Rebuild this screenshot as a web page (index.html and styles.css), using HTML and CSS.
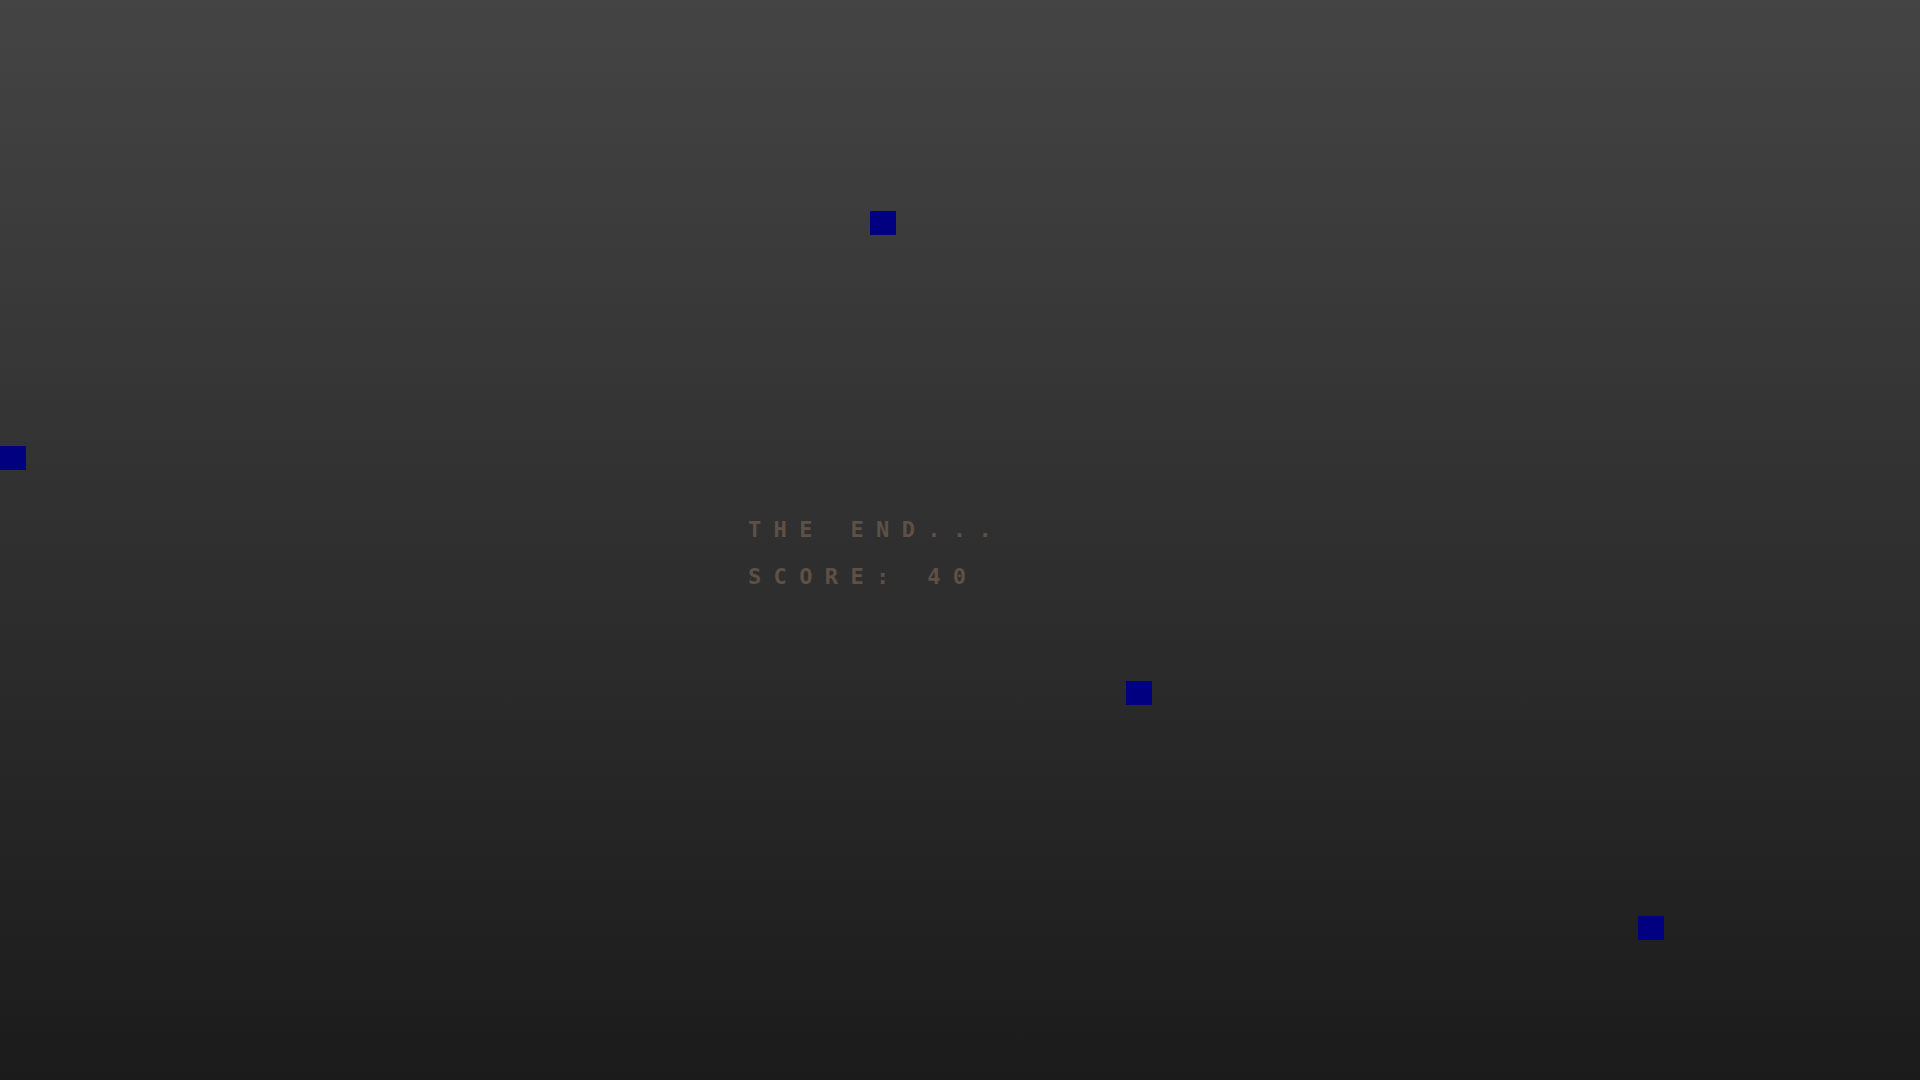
FILE: index.html
```html
<!DOCTYPE html>
<html>
<head>
<meta charset="utf-8">
<link rel="stylesheet" href="styles.css">
</head>
<body>
<div class="stage">
  <div class="block b1"></div>
  <div class="block b2"></div>
  <div class="block b3"></div>
  <div class="block b4"></div>
  <div class="message">
    <div class="line">THE END...</div>
    <div class="line">SCORE: 40</div>
  </div>
</div>
</body>
</html>
```
FILE: styles.css
```css
html, body {
  margin: 0;
  padding: 0;
  width: 1920px;
  height: 1080px;
  overflow: hidden;
}
.stage {
  position: relative;
  width: 1920px;
  height: 1080px;
  background: linear-gradient(to bottom, #444444 0%, #1b1b1b 100%);
}
.block {
  position: absolute;
  width: 26px;
  height: 24px;
  background: #000080;
}
.b1 { left: 870px; top: 211px; }
.b2 { left: 0; top: 446px; }
.b3 { left: 1126px; top: 681px; }
.b4 { left: 1638px; top: 916px; }
.message {
  position: absolute;
  left: 748px;
  top: 506px;
  font-family: "DejaVu Sans Mono", "Liberation Mono", monospace;
  font-weight: bold;
  font-size: 22px;
  line-height: 47px;
  letter-spacing: 12.36px;
  color: #5e5045;
}
.line {
  white-space: pre;
}
```
